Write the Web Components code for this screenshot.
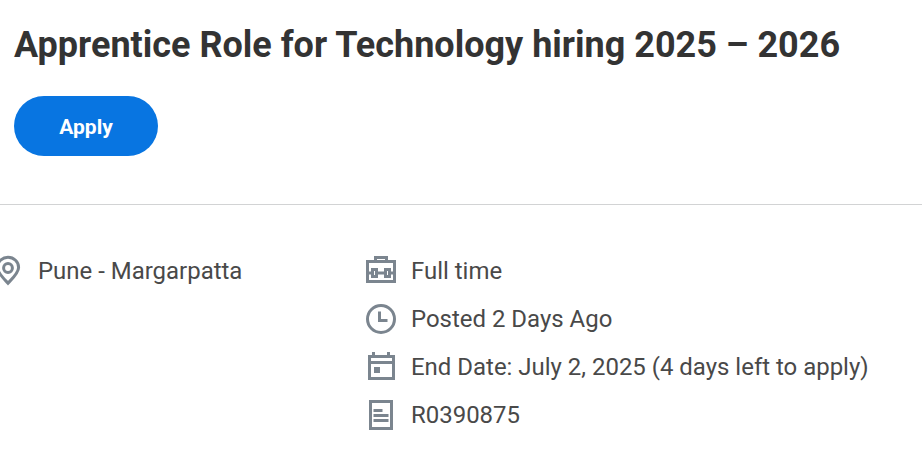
<!DOCTYPE html>
<html lang="en">
<head>
<meta charset="utf-8">
<title>Apprentice Role for Technology hiring 2025 – 2026</title>
<style>
    body{
        margin: 0;
        background: #fff;
        font-family: Roboto, "Liberation Sans", sans-serif;
        overflow: hidden;
    }
</style>
</head>
<body>
<job-posting>
    <job-header slot="header" heading="Apprentice Role for Technology hiring 2025 – 2026">
        <apply-button>Apply</apply-button>
    </job-header>
    <job-detail slot="location" icon="location">Pune - Margarpatta</job-detail>
    <job-detail icon="briefcase">Full time</job-detail>
    <job-detail icon="clock">Posted 2 Days Ago</job-detail>
    <job-detail icon="calendar">End Date: July 2, 2025 (4 days left to apply)</job-detail>
    <job-detail icon="document">R0390875</job-detail>
</job-posting>

<script>
// 36px icons, drawn in currentColor
const icons = {
    location: `<path d="M18 31.2C13.6 26.4 7.4 20.7 7.4 15.4a10.6 10.1 0 0 1 21.2 0C28.6 20.7 22.4 26.4 18 31.2Z" fill="none" stroke="currentColor" stroke-width="3"/>
        <circle cx="18" cy="16" r="4.4" fill="none" stroke="currentColor" stroke-width="3"/>`,
    briefcase: `<path d="M12.5 9V5.5h11V9M4.5 9.5h27v20h-27zM4 21h5m5 0h8m5 0h5" fill="none" stroke="currentColor" stroke-width="3"/>
        <path d="M9.500 17.500h4v7h-4zM22.500 17.500h4v7h-4z" fill="none" stroke="currentColor" stroke-width="3"/>`,
    clock: `<circle cx="18" cy="19" r="13.5" fill="none" stroke="currentColor" stroke-width="3"/>
        <path d="M16.5 11.5V20.5H24.5" fill="none" stroke="currentColor" stroke-width="3"/>`,
    calendar: `<path d="M9 4h3v3h12V4h3v3h5v25H5V7h4zM8 10v3h21v-3zM8 16v13h21V16z" fill="currentColor" fill-rule="evenodd"/>
        <path d="M11 19h6v6h-6z" fill="currentColor"/>`,
    document: `<path d="M7.5 5.5h21v27h-21z" fill="none" stroke="currentColor" stroke-width="3"/>
        <path d="M10.5 13h9v3h-9zM10.5 18h15v3h-15zM10.5 23h15v3h-15z" fill="currentColor"/>`
};

class JobPosting extends HTMLElement{
    constructor(){
        super();
        this.attachShadow({mode:"open"});
        this.shadowRoot.innerHTML = `
            <style>
                :host{
                    display: block;
                }
                .details{
                    display: grid;
                    grid-template-columns: 373px 1fr;
                    margin-left: -10px;
                    padding-top: 47px;
                }
                .column{
                    display: flex;
                    flex-direction: column;
                    gap: 12px;
                }
            </style>
            <slot name="header"></slot>
            <div class="details">
                <div class="column"><slot name="location"></slot></div>
                <div class="column"><slot></slot></div>
            </div>
        `;
    }
}

class JobHeader extends HTMLElement{
    constructor(){
        super();
        this.attachShadow({mode:"open"});
        this.shadowRoot.innerHTML = `
            <style>
                :host{
                    display: block;
                    box-sizing: border-box;
                    height: 205px;
                    padding: 21px 14px 0;
                    border-bottom: 1px solid #d2d3d4;
                }
                h2{
                    margin: 0 0 27px;
                    color: #333;
                    font-size: 36px;
                    font-weight: 700;
                    line-height: 48px;
                    white-space: nowrap;
                }
            </style>
            <h2></h2>
            <slot></slot>
        `;
    }

    connectedCallback(){
        this.shadowRoot.querySelector("h2").textContent = this.getAttribute("heading");
    }
}

class ApplyButton extends HTMLElement{
    constructor(){
        super();
        this.attachShadow({mode:"open"});
        this.shadowRoot.innerHTML = `
            <style>
                :host{
                    display: block;
                }
                button{
                    display: block;
                    width: 144px;
                    height: 60px;
                    padding: 2px 0 0;
                    border: 0;
                    border-radius: 30px;
                    background: #0875e1;
                    color: #fff;
                    font: 700 21px Roboto, "Liberation Sans", sans-serif;
                    cursor: pointer;
                }
                button:hover{
                    background: #005cb9;
                }
            </style>
            <button type="button"><slot></slot></button>
        `;
    }
}

class JobDetail extends HTMLElement{
    constructor(){
        super();
        this.attachShadow({mode:"open"});
        this.shadowRoot.innerHTML = `
            <style>
                :host{
                    display: flex;
                    align-items: center;
                    gap: 12px;
                    height: 36px;
                    color: #494949;
                    font-size: 23.96px;
                    line-height: 36px;
                    white-space: nowrap;
                }
                svg{
                    flex: none;
                    width: 36px;
                    height: 36px;
                    color: #7b858f;
                }
                .text{
                    padding-top: 2px;
                }
            </style>
            <svg viewBox="0 0 36 36" aria-hidden="true"></svg>
            <span class="text"><slot></slot></span>
        `;
    }

    connectedCallback(){
        this.shadowRoot.querySelector("svg").innerHTML = icons[this.getAttribute("icon")];
    }
}

customElements.define("job-posting", JobPosting);
customElements.define("job-header", JobHeader);
customElements.define("apply-button", ApplyButton);
customElements.define("job-detail", JobDetail);
</script>
</body>
</html>
